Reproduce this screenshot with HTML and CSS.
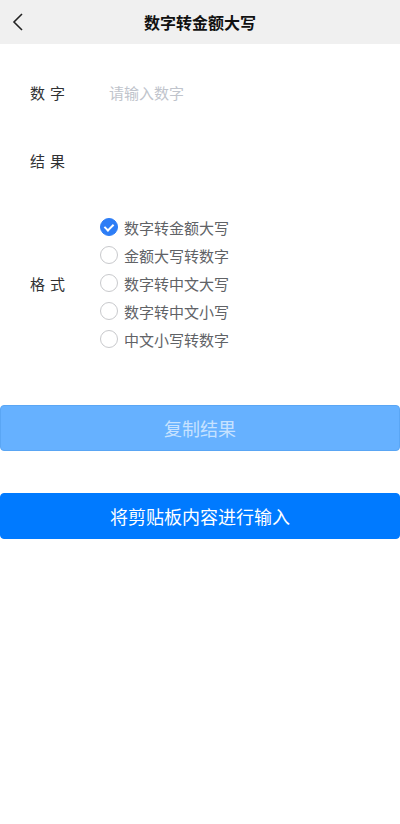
FILE: index.html
```html
<!DOCTYPE html>
<html lang="zh-CN">
<head>
  <meta charset="UTF-8" />
  <title>数字转金额大写</title>
  <link rel="stylesheet" href="styles.css">
</head>
<body>
  <div class="nav-bar">
    <span class="nav-back">
      <svg width="12" height="18" viewBox="0 0 12 18"><path d="M10 1 L2 9 L10 17" fill="none" stroke="#222" stroke-width="1.6"/></svg>
    </span>
    <span class="nav-title">数字转金额大写</span>
  </div>

  <div class="form">
    <div class="form-row">
      <label class="form-label">数字</label>
      <input class="form-input" type="text" placeholder="请输入数字" />
    </div>

    <div class="form-row">
      <label class="form-label">结果</label>
      <div class="form-value"></div>
    </div>

    <div class="form-row format-row">
      <label class="form-label">格式</label>
      <div class="radio-group">
        <div class="radio checked"><span class="radio-icon"></span>数字转金额大写</div>
        <div class="radio"><span class="radio-icon"></span>金额大写转数字</div>
        <div class="radio"><span class="radio-icon"></span>数字转中文大写</div>
        <div class="radio"><span class="radio-icon"></span>数字转中文小写</div>
        <div class="radio"><span class="radio-icon"></span>中文小写转数字</div>
      </div>
    </div>
  </div>

  <button class="btn btn-disabled" disabled>复制结果</button>
  <button class="btn btn-primary">将剪贴板内容进行输入</button>
</body>
</html>
```

FILE: styles.css
```css
body {
  font-family: "Noto Sans CJK SC", "Microsoft YaHei", sans-serif;
  background: #fff;
  color: #303133;
  margin: 0;
  padding: 0;
}
.nav-bar {
  height: 44px;
  background: #f0f0f0;
  display: flex;
  align-items: center;
  justify-content: center;
  position: relative;
}
.nav-back {
  position: absolute;
  left: 12px;
  top: 13px;
  display: flex;
}
.nav-title {
  font-size: 16px;
  font-weight: bold;
  color: #111;
}
.form {
  padding: 30px 0 0 30px;
}
.form-row {
  display: flex;
  align-items: center;
  height: 36px;
  margin-bottom: 32px;
}
.form-label {
  width: 79px;
  font-size: 15px;
  letter-spacing: 5px;
  color: #303133;
}
.form-input {
  border: none;
  outline: none;
  font-size: 15px;
  font-family: inherit;
  padding: 0;
  color: #303133;
}
.form-input::placeholder {
  color: #c0c4cc;
}
.format-row {
  height: auto;
  margin-top: 35px;
  margin-bottom: 0;
}
.format-row .form-label {
  width: 70px;
}
.radio-group {
  display: flex;
  flex-direction: column;
}
.radio {
  display: flex;
  align-items: center;
  height: 28px;
  font-size: 15px;
  color: #606266;
}
.radio-icon {
  width: 16px;
  height: 16px;
  border: 1px solid #c8c9cc;
  border-radius: 50%;
  margin-right: 6px;
  box-sizing: content-box;
  position: relative;
}
.radio.checked .radio-icon {
  background: #2d7df6;
  border-color: #2d7df6;
}
.radio.checked .radio-icon::after {
  content: "";
  position: absolute;
  left: 5px;
  top: 3px;
  width: 4px;
  height: 7px;
  border: solid #fff;
  border-width: 0 2px 2px 0;
  transform: rotate(45deg);
}
.btn {
  display: block;
  width: 100%;
  height: 46px;
  border-radius: 4px;
  font-size: 18px;
  font-family: inherit;
  color: #fff;
}
.btn-disabled {
  margin-top: 52px;
  background: #66b1ff;
  border: 1px solid #5aa6f4;
  color: #c6e2ff;
}
.btn-primary {
  margin-top: 42px;
  background: #007aff;
  border: 1px solid #007aff;
}
```
